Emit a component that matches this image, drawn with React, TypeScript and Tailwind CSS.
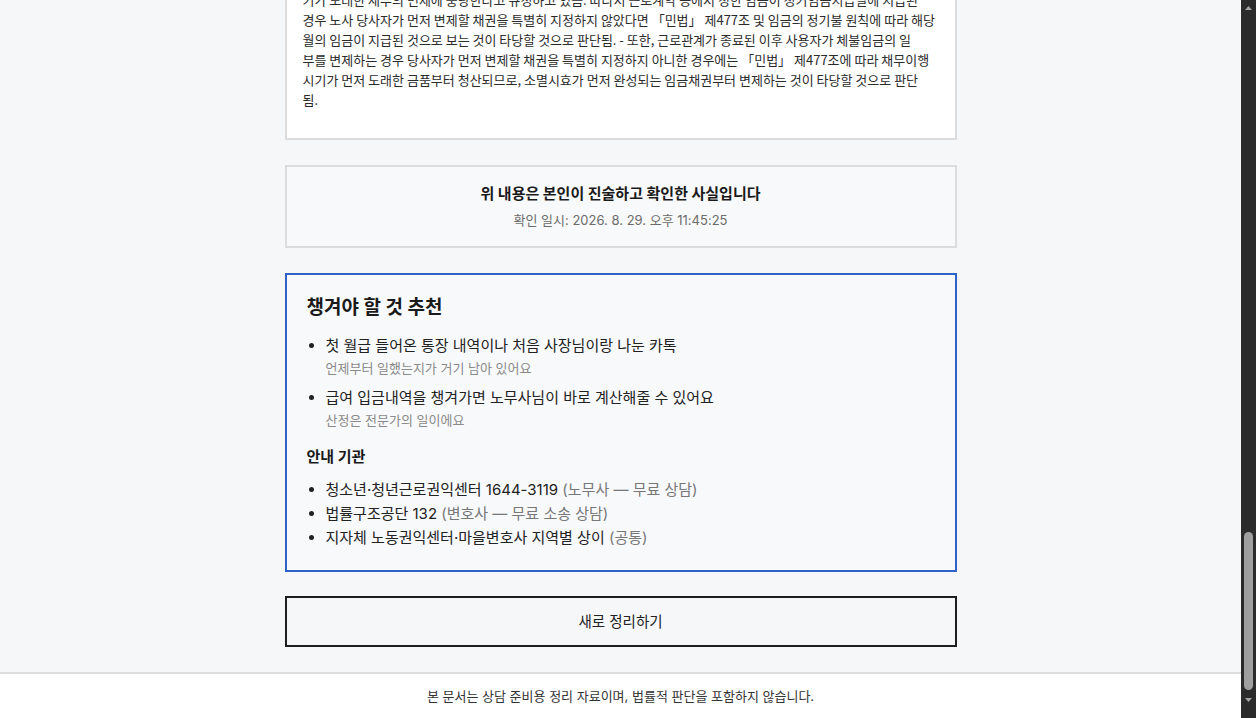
import { useLayoutEffect, useRef } from "react";

const rows: [string, string][] = [
  ["근무지", "○○식당 (서울특별시 마포구)"],
  ["근무 기간", "2025. 3. 4. ~ 2026. 7. 31."],
  ["고용 형태", "아르바이트 (주 5일)"],
  ["임금 형태", "시급 10,030원"],
  ["주당 근무시간", "약 30시간"],
  ["퇴사 여부", "퇴사함 (2026. 7. 31.)"],
];

const wages: [string, string, string, string][] = [
  ["2026. 1.", "1,204,000원", "1,204,000원", "0원"],
  ["2026. 2.", "1,204,000원", "904,000원", "300,000원"],
  ["2026. 3.", "1,304,000원", "1,000,000원", "304,000원"],
  ["2026. 4.", "1,304,000원", "800,000원", "504,000원"],
  ["2026. 5.", "1,304,000원", "800,000원", "504,000원"],
  ["2026. 6.", "1,304,000원", "500,000원", "804,000원"],
  ["2026. 7.", "1,304,000원", "0원", "1,304,000원"],
];

const timeline: [string, string][] = [
  ["2025. 3. 4.", "첫 출근, 구두로 시급 10,030원 약속받음"],
  ["2026. 2. 10.", "월급 일부만 입금됨, 사장님이 다음 달에 주겠다고 함"],
  ["2026. 4. 10.", "미지급분이 계속 쌓이기 시작함"],
  ["2026. 6. 10.", "사장님께 카톡으로 밀린 월급 요청"],
  ["2026. 7. 31.", "퇴사, 마지막 달 월급 전혀 받지 못함"],
  ["2026. 8. 14.", "퇴사 후 14일이 지났지만 정산되지 않음"],
];

function Arrow({ up }: { up?: boolean }) {
  return (
    <svg width="7" height="4" viewBox="0 0 7 4" className="block">
      <path d={up ? "M3.5 0 L7 4 L0 4 Z" : "M0 0 L7 0 L3.5 4 Z"} fill="#a3a3a3" />
    </svg>
  );
}

export default function App() {
  const ref = useRef<HTMLDivElement>(null);

  useLayoutEffect(() => {
    const toBottom = () => {
      const el = ref.current;
      if (el) el.scrollTop = el.scrollHeight;
    };
    toBottom();
    requestAnimationFrame(toBottom);
    const t = setTimeout(toBottom, 50);
    if (document.fonts) document.fonts.ready.then(toBottom);
    return () => clearTimeout(t);
  }, []);

  return (
    <div className="flex h-screen bg-[#f6f7f9] text-[#222] font-['Inter','Noto_Sans_CJK_KR',sans-serif]">
      <div ref={ref} className="min-w-0 flex-1 overflow-y-scroll [scrollbar-width:none]">
        <header className="border-b-2 border-[#dcdcdc] bg-white">
          <div className="mx-auto max-w-2xl py-4">
            <div className="text-[19px] font-bold leading-[26px] text-[#1a1a1a]">상담 준비 정리</div>
            <div className="text-[13px] leading-5 text-[#666]">임금체불 상담을 위한 사실관계 정리 문서</div>
          </div>
        </header>

        <main className="mx-auto flex max-w-2xl flex-col gap-6 pb-[25px] pt-8">
          <div>
            <h1 className="text-[23px] font-bold leading-8 text-[#1a1a1a]">임금체불 상담 준비 자료</h1>
            <p className="text-[13px] leading-5 text-[#666]">작성일 2026. 8. 29. · 진술인 본인 작성</p>
          </div>

          <section className="border-2 border-[#dcdcdc] bg-white p-5">
            <h2 className="mb-[14px] text-[19px] font-bold leading-[26px] text-[#1a1a1a]">기본 정보</h2>
            <div className="flex flex-col">
              {rows.map(([k, v]) => (
                <div key={k} className="flex border-b border-[#eeeeee] py-[6px] text-[15px] leading-5 last:border-b-0">
                  <div className="w-[140px] text-[#777]">{k}</div>
                  <div className="flex-1 text-[#222]">{v}</div>
                </div>
              ))}
            </div>
          </section>

          <section className="border-2 border-[#dcdcdc] bg-white p-5">
            <h2 className="mb-[14px] text-[19px] font-bold leading-[26px] text-[#1a1a1a]">상황 요약</h2>
            <p className="text-[15px] leading-[22px] text-[#333]">
              2025년 3월부터 ○○식당에서 주 5일 아르바이트로 근무하였음. 처음 약 11개월 동안은 매월 10일에 월급이 정상적으로 지급되었으나,
              2026년 2월부터 사장님이 가게 사정이 어렵다며 월급의 일부만 지급하기 시작하였음. 미지급분은 다음 달에 함께 주겠다고 하였으나
              실제로는 지급되지 않았고, 매월 미지급 금액이 늘어났음. 2026년 7월 말 퇴사하였으며, 마지막 달 월급은 전혀 받지 못하였음.
              퇴사 후 14일이 지났음에도 체불임금 및 퇴직금에 대한 정산이 이루어지지 않아 상담을 준비하게 되었음.
            </p>
          </section>

          <section className="border-2 border-[#dcdcdc] bg-white p-5">
            <h2 className="mb-[14px] text-[19px] font-bold leading-[26px] text-[#1a1a1a]">체불 내역</h2>
            <div className="grid grid-cols-4 border-b-2 border-[#dcdcdc] py-[6px] text-[13px] font-bold leading-5 text-[#555]">
              <div>지급 월</div>
              <div className="text-right">받아야 할 금액</div>
              <div className="text-right">받은 금액</div>
              <div className="text-right">미지급액</div>
            </div>
            {wages.map((w) => (
              <div key={w[0]} className="grid grid-cols-4 border-b border-[#eeeeee] py-[6px] text-[14px] leading-5">
                <div className="text-[#333]">{w[0]}</div>
                <div className="text-right text-[#333]">{w[1]}</div>
                <div className="text-right text-[#333]">{w[2]}</div>
                <div className="text-right text-[#222]">{w[3]}</div>
              </div>
            ))}
            <div className="grid grid-cols-4 pt-[10px] text-[15px] font-bold leading-6">
              <div>합계</div>
              <div />
              <div />
              <div className="text-right">3,720,000원</div>
            </div>
          </section>

          <section className="border-2 border-[#dcdcdc] bg-white p-5">
            <h2 className="mb-[14px] text-[19px] font-bold leading-[26px] text-[#1a1a1a]">시간순 정리</h2>
            <ol className="flex flex-col gap-3">
              {timeline.map(([d, t]) => (
                <li key={d} className="flex gap-4 text-[15px] leading-[22px]">
                  <span className="w-[104px] shrink-0 text-[#777]">{d}</span>
                  <span className="text-[#222]">{t}</span>
                </li>
              ))}
            </ol>
          </section>

          <section className="border-2 border-[#dcdcdc] bg-white p-5">
            <h2 className="mb-[14px] text-[19px] font-bold leading-[26px] text-[#1a1a1a]">증거 자료 현황</h2>
            <ul className="flex list-disc flex-col gap-2 pl-[19px] text-[15px] leading-[22px] text-[#222]">
              <li>근로계약서: 작성하지 않음 (구두 약속)</li>
              <li>급여 입금 통장 내역: 보유 (2025. 4. ~ 2026. 6.)</li>
              <li>사장님과의 카카오톡 대화: 보유 (일부 캡처)</li>
              <li>출퇴근 기록: 개인 메모 및 달력 기록</li>
              <li>동료 진술: 함께 근무한 동료 1명 연락 가능</li>
            </ul>
          </section>

          <section className="mb-px border-2 border-[#dcdcdc] bg-white px-4 pb-7 pt-5">
            <h2 className="mb-[14px] text-[19px] font-bold leading-[26px] text-[#1a1a1a]">관련 법령 및 해석 참고</h2>
            <div className="flex flex-col gap-3 font-['Noto_Sans_CJK_KR',sans-serif] text-[13px] leading-5 text-[#2b2b2b]">
              <p>
                - 「근로기준법」 제36조는 사용자는 근로자가 사망 또는 퇴직한 경우에는 그 지급 사유가 발생한 때부터 14일 이내에 임금, 보상금, 그 밖의 모든 금품을 지급하여야 한다고 규정하고 있으며, 특별한 사정이 있을 경우에는 당사자 사이의 합의에 의하여 기일을 연장할 수 있음.
              </p>
              <p>
                - 「근로기준법」 제43조는 임금은 통화로 직접 근로자에게 그 전액을 지급하여야 하며, 매월 1회 이상 일정한 날짜를 정하여 지급하여야 한다고 규정하고 있음. 이를 위반한 경우 같은 법 제109조에 따라 3년 이하의 징역 또는 3천만원 이하의 벌금에 처해질 수 있음.
              </p>
              <p>
                - 「근로기준법」 제49조에 따라 이 법에 따른 임금채권은 3년간 행사하지 아니하면 시효로 소멸하므로, 체불임금이 발생한 시점부터 3년이 경과한 부분은 청구가 어려울 수 있음.
              </p>
              <p>
                - 「근로자퇴직급여 보장법」 제9조는 사용자는 근로자가 퇴직한 경우에는 그 지급사유가 발생한 날부터 14일 이내에 퇴직금을 지급하여야 한다고 규정하고 있음.
              </p>
              <p>
                - 임금 일부 지급 시 변제충당과 관련하여, 「민법」 제476조 및 제477조는 당사자가 변제에 충당할 채무를 지정하지 아니한 때에는 변제기가 도래한 채무와 도래하지 아니한 채무가 있으면 이행
                <br />
                기가 도래한 채무의 변제에 충당한다고 규정하고 있음. 따라서 근로계약 등에서 정한 임금이 정기임금지급일에 지급된
                <br />
                경우 노사 당사자가 먼저 변제할 채권을 특별히 지정하지 않았다면 「민법」 제477조 및 임금의 정기불 원칙에 따라 해당
                <br />
                월의 임금이 지급된 것으로 보는 것이 타당할 것으로 판단됨. - 또한, 근로관계가 종료된 이후 사용자가 체불임금의 일
                <br />
                부를 변제하는 경우 당사자가 먼저 변제할 채권을 특별히 지정하지 아니한 경우에는 「민법」 제477조에 따라 채무이행
                <br />
                시기가 먼저 도래한 금품부터 청산되므로, 소멸시효가 먼저 완성되는 임금채권부터 변제하는 것이 타당할 것으로 판단
                <br />
                됨.
              </p>
            </div>
          </section>

          <section className="mb-px border-2 border-[#dcdcdc] bg-[#f8f9fa] py-4 text-center">
            <p className="text-[15px] font-bold leading-[22px] text-[#1a1a1a]">위 내용은 본인이 진술하고 확인한 사실입니다</p>
            <p className="mt-[5px] text-[13px] leading-5 text-[#6b6b6b]">확인 일시: 2026. 8. 29. 오후 11:45:25</p>
          </section>

          <section className="border-2 border-[#2f63c9] bg-[#f8f9fb] p-5">
            <h2 className="mb-[14px] text-[19px] font-bold leading-[26px] text-[#1a1a1a]">챙겨야 할 것 추천</h2>
            <ul className="flex list-disc flex-col gap-[10px] pl-[19px] marker:text-[#222]">
              <li className="text-[15px] leading-[22px] text-[#222]">
                첫 월급 들어온 통장 내역이나 처음 사장님이랑 나눈 카톡
                <p className="mt-[2px] text-[13px] leading-[18px] text-[#8a8a8a]">언제부터 일했는지가 거기 남아 있어요</p>
              </li>
              <li className="text-[15px] leading-[22px] text-[#222]">
                급여 입금내역을 챙겨가면 노무사님이 바로 계산해줄 수 있어요
                <p className="mt-[2px] text-[13px] leading-[18px] text-[#8a8a8a]">산정은 전문가의 일이에요</p>
              </li>
            </ul>
            <h3 className="mb-[10px] mt-[17px] text-[15px] font-bold leading-[22px] text-[#1a1a1a]">안내 기관</h3>
            <ul className="list-disc pl-[19px] text-[15px] leading-6 text-[#222]">
              <li>
                청소년·청년근로권익센터 1644-3119 <span className="text-[#777]">(노무사 — 무료 상담)</span>
              </li>
              <li>
                법률구조공단 132 <span className="text-[#777]">(변호사 — 무료 소송 상담)</span>
              </li>
              <li>
                지자체 노동권익센터·마을변호사 지역별 상이 <span className="text-[#777]">(공통)</span>
              </li>
            </ul>
          </section>

          <button className="h-[51px] w-full border-2 border-[#1e1e1e] text-[14.5px] text-[#222]">새로 정리하기</button>
        </main>

        <footer className="border-t-2 border-[#dcdcdc] bg-white py-3 text-center text-[13px] leading-5 text-[#333]">
          본 문서는 상담 준비용 정리 자료이며, 법률적 판단을 포함하지 않습니다.
        </footer>
      </div>

      <div aria-hidden="true" className="flex w-[15px] shrink-0 flex-col bg-[#2b2b2b]">
        <div className="flex h-[15px] items-center justify-center">
          <Arrow up />
        </div>
        <div className="flex flex-1 flex-col justify-end px-[3px] pb-[2px]">
          <div className="h-[158px] rounded-full bg-[#9f9f9f]" />
        </div>
        <div className="flex h-[15px] items-center justify-center">
          <Arrow />
        </div>
        <div className="h-[11px]" />
      </div>
    </div>
  );
}
